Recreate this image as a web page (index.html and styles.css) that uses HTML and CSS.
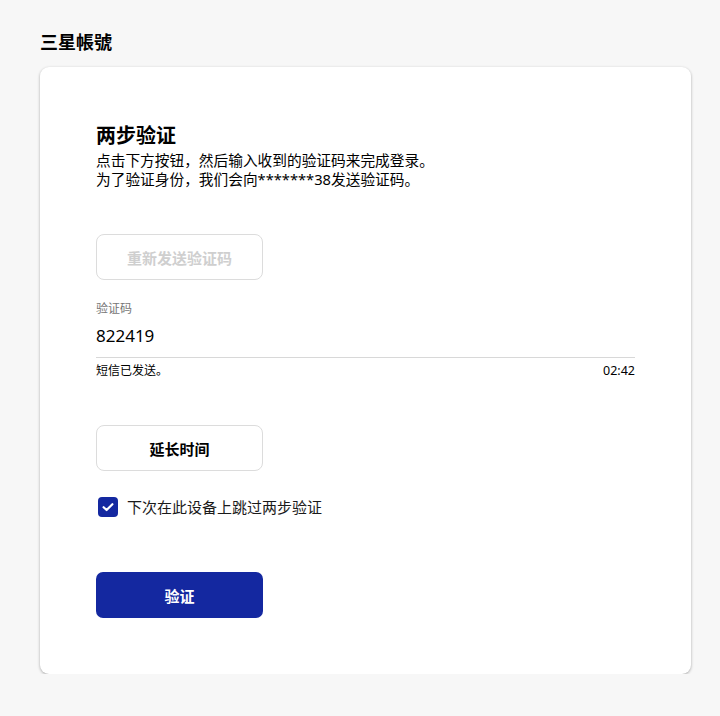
FILE: index.html
```html
<!DOCTYPE html>
<html lang="zh-CN">
<head>
<meta charset="utf-8">
<title>三星帳號</title>
<link rel="stylesheet" href="styles.css">
</head>
<body>
<div class="page">
  <h1 class="brand">三星帳號</h1>
  <main class="card">
    <h2 class="title">两步验证</h2>
    <p class="desc">点击下方按钮，然后输入收到的验证码来完成登录。<br>为了验证身份，我们会向*******38发送验证码。</p>
    <button class="btn btn-outline btn-disabled" type="button">重新发送验证码</button>
    <div class="field">
      <label class="field-label">验证码</label>
      <div class="field-value">822419</div>
    </div>
    <div class="helper">
      <span>短信已发送。</span>
      <span class="timer">02:42</span>
    </div>
    <button class="btn btn-outline btn-extend" type="button">延长时间</button>
    <label class="check-row">
      <span class="checkbox">
        <svg viewBox="0 0 20 20" width="20" height="20"><path d="M5.6 10.2 L8.6 13 L14.4 7.2" fill="none" stroke="#fff" stroke-width="2.2" stroke-linecap="round" stroke-linejoin="round"/></svg>
      </span>
      <span class="check-text">下次在此设备上跳过两步验证</span>
    </label>
    <button class="btn btn-primary" type="button">验证</button>
  </main>
</div>
</body>
</html>
```
FILE: styles.css
```css
* { box-sizing: border-box; }
html, body { margin: 0; padding: 0; background: #f7f7f7; }
body {
  font-family: "Noto Sans", "Noto Sans CJK SC", sans-serif;
  color: #000;
  text-spacing-trim: space-all;
}
.page {
  padding: 30px 29px 0 40px;
}
.brand {
  margin: 0;
  font-size: 18px;
  line-height: 24px;
  font-weight: 700;
  font-family: "Noto Sans", "Noto Sans CJK TC", sans-serif;
}
.card {
  margin-top: 13px;
  width: 651px;
  background: #fff;
  border-radius: 9px;
  box-shadow: 0 1px 3px rgba(0,0,0,0.32);
  padding: 56px 56px 56px 56px;
  display: flex;
  flex-direction: column;
  align-items: flex-start;
}
.title {
  margin: 0;
  font-size: 20px;
  line-height: 26px;
  font-weight: 700;
}
.desc {
  margin: 2px 0 0 0;
  font-size: 14.7px;
  line-height: 19px;
  color: #000;
}
.btn {
  width: 167px;
  height: 46px;
  border-radius: 8px;
  font-family: inherit;
  font-size: 15px;
  font-weight: 700;
  cursor: pointer;
}
.btn-outline {
  background: #fff;
  border: 1px solid #dcdcdc;
}
.btn-disabled {
  margin-top: 45px;
  color: #cfcfcf;
}
.field {
  margin-top: 21px;
  width: 100%;
  border-bottom: 1px solid #d8d8d8;
  padding-bottom: 10px;
}
.field-label {
  display: block;
  font-size: 12px;
  line-height: 16px;
  color: #767676;
}
.field-value {
  margin-top: 8px;
  font-size: 17px;
  line-height: 22px;
  color: #000;
}
.helper {
  margin-top: 5px;
  width: 100%;
  display: flex;
  justify-content: space-between;
  font-size: 12px;
  line-height: 16px;
  color: #000;
}
.timer { font-size: 12.5px; }
.btn-extend {
  margin-top: 46px;
  color: #000;
}
.check-row {
  margin-top: 25px;
  display: flex;
  align-items: center;
  gap: 9px;
  padding-left: 2px;
}
.checkbox {
  width: 20px;
  height: 20px;
  border-radius: 4px;
  background: #1428a0;
  display: flex;
}
.check-text {
  font-size: 15px;
  line-height: 22px;
  color: #1a1a1a;
}
.btn-primary {
  margin-top: 54px;
  background: #1428a0;
  color: #fff;
  border: none;
  border-radius: 7px;
}
```
